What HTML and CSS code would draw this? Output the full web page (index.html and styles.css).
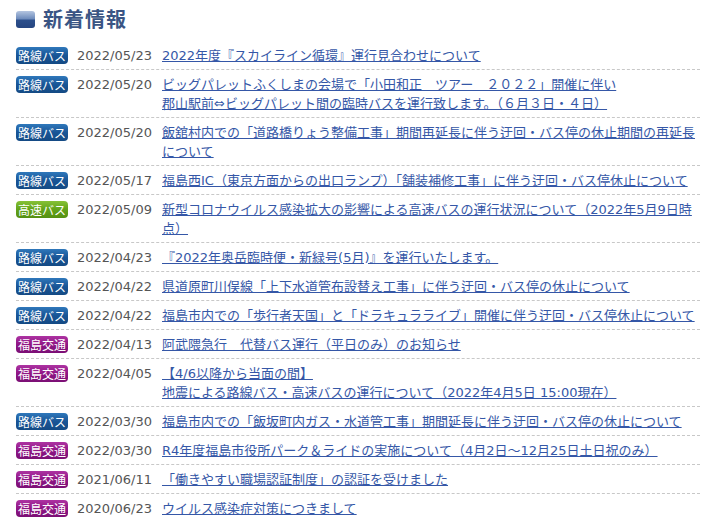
FILE: index.html
```html
<!DOCTYPE html>
<html lang="ja">
<head>
  <meta charset="UTF-8" />
  <title>新着情報</title>
  <link rel="stylesheet" href="styles.css">
</head>
<body>
  <div class="news">
    <h2 class="news-title"><span class="title-mark"></span>新着情報</h2>
    <ul class="news-list">
      <li class="news-item">
        <span class="tag tag-route">路線バス</span>
        <span class="date">2022/05/23</span>
        <a class="news-link" href="#">2022年度『スカイライン循環』運行見合わせについて</a>
      </li>
      <li class="news-item">
        <span class="tag tag-route">路線バス</span>
        <span class="date">2022/05/20</span>
        <a class="news-link" href="#">ビッグパレットふくしまの会場で「小田和正　ツアー　２０２２」開催に伴い<br>郡山駅前⇔ビッグパレット間の臨時バスを運行致します。（６月３日・４日）</a>
      </li>
      <li class="news-item">
        <span class="tag tag-route">路線バス</span>
        <span class="date">2022/05/20</span>
        <a class="news-link" href="#">飯舘村内での「道路橋りょう整備工事」期間再延長に伴う迂回・バス停の休止期間の再延長について</a>
      </li>
      <li class="news-item">
        <span class="tag tag-route">路線バス</span>
        <span class="date">2022/05/17</span>
        <a class="news-link" href="#">福島西IC（東京方面からの出口ランプ）「舗装補修工事」に伴う迂回・バス停休止について</a>
      </li>
      <li class="news-item">
        <span class="tag tag-express">高速バス</span>
        <span class="date">2022/05/09</span>
        <a class="news-link" href="#">新型コロナウイルス感染拡大の影響による高速バスの運行状況について（2022年5月9日時点）</a>
      </li>
      <li class="news-item">
        <span class="tag tag-route">路線バス</span>
        <span class="date">2022/04/23</span>
        <a class="news-link" href="#">『2022年奥岳臨時便・新緑号(5月)』を運行いたします。</a>
      </li>
      <li class="news-item">
        <span class="tag tag-route">路線バス</span>
        <span class="date">2022/04/22</span>
        <a class="news-link" href="#">県道原町川俣線「上下水道管布設替え工事」に伴う迂回・バス停の休止について</a>
      </li>
      <li class="news-item">
        <span class="tag tag-route">路線バス</span>
        <span class="date">2022/04/22</span>
        <a class="news-link" href="#">福島市内での「歩行者天国」と「ドラキュラライブ」開催に伴う迂回・バス停休止について</a>
      </li>
      <li class="news-item">
        <span class="tag tag-company">福島交通</span>
        <span class="date">2022/04/13</span>
        <a class="news-link" href="#">阿武隈急行　代替バス運行（平日のみ）のお知らせ</a>
      </li>
      <li class="news-item">
        <span class="tag tag-company">福島交通</span>
        <span class="date">2022/04/05</span>
        <a class="news-link" href="#">【4/6以降から当面の間】<br>地震による路線バス・高速バスの運行について（2022年4月5日 15:00現在）</a>
      </li>
      <li class="news-item">
        <span class="tag tag-route">路線バス</span>
        <span class="date">2022/03/30</span>
        <a class="news-link" href="#">福島市内での「飯坂町内ガス・水道管工事」期間延長に伴う迂回・バス停の休止について</a>
      </li>
      <li class="news-item">
        <span class="tag tag-company">福島交通</span>
        <span class="date">2022/03/30</span>
        <a class="news-link" href="#">R4年度福島市役所パーク＆ライドの実施について（4月2日～12月25日土日祝のみ）</a>
      </li>
      <li class="news-item">
        <span class="tag tag-company">福島交通</span>
        <span class="date">2021/06/11</span>
        <a class="news-link" href="#">「働きやすい職場認証制度」の認証を受けました</a>
      </li>
      <li class="news-item">
        <span class="tag tag-company">福島交通</span>
        <span class="date">2020/06/23</span>
        <a class="news-link" href="#">ウイルス感染症対策につきまして</a>
      </li>
    </ul>
  </div>
</body>
</html>
```

FILE: styles.css
```css
body {
  margin: 0;
  background: #fff;
  font-family: "DejaVu Sans", "Noto Sans CJK JP", sans-serif;
  font-size: 13px;
  color: #555;
}
.news {
  padding: 8px 9px 0 16px;
}
.news-title {
  display: flex;
  align-items: center;
  gap: 8px;
  margin: 0 0 11px;
  height: 22px;
  font-family: "Noto Sans CJK JP", sans-serif;
  font-size: 20px;
  font-weight: 700;
  letter-spacing: 1px;
  color: #3a5584;
  line-height: 22px;
}
.title-mark {
  width: 19px;
  height: 17px;
  border-radius: 3px;
  background: linear-gradient(#b4c5e0, #6f8dbd 45%, #2c4f8c 55%, #254580);
}
.news-list {
  list-style: none;
  margin: 0;
  padding: 0;
}
.news-item {
  display: flex;
  align-items: flex-start;
  padding: 5px 0 4px;
  line-height: 19px;
  border-bottom: 1px dashed #c8c8c8;
}
.tag {
  flex: none;
  width: 52px;
  height: 17px;
  margin-top: 1px;
  border-radius: 4px;
  font-family: "Noto Sans CJK JP", sans-serif;
  font-size: 12px;
  line-height: 17px;
  text-align: center;
  color: #fff;
  box-sizing: border-box;
}
.tag-route {
  background: linear-gradient(#2f78bb, #195596 50%, #144a84);
}
.tag-express {
  background: linear-gradient(#86c236, #62a31a 50%, #559012);
}
.tag-company {
  background: linear-gradient(#ad33a2, #8f1685 50%, #7b0f75);
}
.date {
  flex: none;
  margin-left: 9px;
  width: 76px;
  color: #555;
}
.news-link {
  flex: 1;
  margin-left: 9px;
  color: #3557a7;
  text-decoration: underline;
}
```
